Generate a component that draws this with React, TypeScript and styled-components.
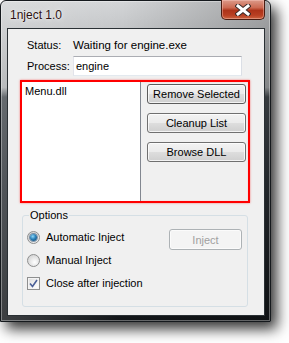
import React from "react";
import styled, { createGlobalStyle } from "styled-components";

const Global = createGlobalStyle`
  html, body { margin: 0; padding: 0; background: #ffffff; }
  body { font-family: "Liberation Sans", Arial, sans-serif; font-size: 11px; color: #000; }
  * { box-sizing: border-box; }
`;

const Page = styled.div`
  width: 289px;
  height: 343px;
  overflow: hidden;
`;

const Window = styled.div`
  position: relative;
  width: 271px;
  height: 322px;
  border: 1px solid #15191d;
  border-radius: 6px 6px 0 0;
  background:
    linear-gradient(90deg, rgba(255,255,255,0.18) 0%, rgba(255,255,255,0) 45%, rgba(0,0,0,0.22) 100%),
    linear-gradient(180deg, #d3d5d7 0%, #bfc1c3 12%, #a9acae 27%, #454b50 30%, #2a2f34 60%, #121518 100%);
  box-shadow: 6px 7px 14px rgba(0, 0, 0, 0.8), inset 0 0 0 1px rgba(255,255,255,0.35);
  display: flex;
  flex-direction: column;
  padding: 0 6px 6px 7px;
`;

const TitleBar = styled.div`
  height: 28px;
  display: flex;
  align-items: center;
  padding-left: 2px;
`;

const Title = styled.span`
  font-family: "Liberation Sans", Arial, sans-serif;
  font-size: 12px;
  color: #2e1212;
  text-shadow: 0 0 6px rgba(255, 255, 255, 0.9), 0 0 2px rgba(255,255,255,0.8);
`;

const CloseButton = styled.div`
  position: absolute;
  top: -1px;
  right: 5px;
  width: 44px;
  height: 20px;
  border: 1px solid #4a1d12;
  border-top: none;
  border-radius: 0 0 5px 5px;
  background: linear-gradient(180deg, #dc9a8a 0%, #cc6a52 40%, #ad3319 55%, #b93f22 80%, #cc6440 100%);
  box-shadow: inset 0 0 0 1px rgba(255, 210, 200, 0.4);
  display: flex;
  align-items: center;
  justify-content: center;
`;

const Client = styled.div`
  flex: 1;
  background: #f0f0f0;
  box-shadow: 0 0 0 1px #2a3034;
  display: flex;
  flex-direction: column;
  padding-top: 9px;
`;

const Row = styled.div<{ $h: number; $mt?: number }>`
  display: grid;
  grid-template-columns: 46px 1fr;
  align-items: center;
  height: ${(p) => p.$h}px;
  margin-top: ${(p) => p.$mt ?? 0}px;
  padding: 0 22px 0 19px;
  line-height: 14px;
`;

const Value = styled.span`
  font-size: 11.5px;
`;

const TextInput = styled.div`
  height: 20px;
  background: #ffffff;
  border: 1px solid #abadb3;
  border-left-color: #e2e3ea;
  border-right-color: #dbdfe6;
  border-bottom-color: #e3e9ef;
  padding: 0 2px;
  display: flex;
  align-items: center;
`;

const RedBox = styled.div`
  margin: 4px 14px 0 12px;
  height: 123px;
  border: 2px solid #ff0000;
  box-shadow: 0 0 2px rgba(255, 0, 0, 0.5), inset 0 0 1px rgba(255, 0, 0, 0.4);
  display: grid;
  grid-template-columns: 119px 1fr;
`;

const ListBox = styled.div`
  background: #ffffff;
  border-right: 1px solid #828790;
  padding: 2px 3px;
  line-height: 14px;
`;

const ButtonColumn = styled.div`
  display: flex;
  flex-direction: column;
  align-items: flex-end;
  gap: 9px;
  padding: 2px 2px 0 0;
`;

const Button = styled.div<{ $w: number; $h?: number; $disabled?: boolean; $focused?: boolean }>`
  width: ${(p) => p.$w}px;
  height: ${(p) => p.$h ?? 20}px;
  border: 1px solid ${(p) => (p.$disabled ? "#adb2b5" : p.$focused ? "#5c5c5c" : "#707070")};
  border-radius: 3px;
  background: ${(p) =>
    p.$disabled
      ? "#f4f4f4"
      : "linear-gradient(180deg, #f3f3f3 0%, #ebebeb 48%, #dddddd 52%, #cfcfcf 100%)"};
  box-shadow: inset 0 0 0 1px ${(p) => (p.$disabled ? "rgba(255,255,255,0.6)" : "rgba(255,255,255,0.75)")};
  color: ${(p) => (p.$disabled ? "#a0a0a0" : "#000")};
  display: flex;
  align-items: center;
  justify-content: center;
  font-size: 11px;
  line-height: 14px;
`;

const Group = styled.div`
  position: relative;
  margin: 12px 16px 0 14px;
  height: 92px;
  border: 1px solid #d5dfe5;
  border-radius: 3px;
  display: grid;
  grid-template-columns: 1fr auto;
  padding: 13px 5px 0 4px;
`;

const Legend = styled.span`
  position: absolute;
  top: -8px;
  left: 6px;
  padding: 0 1px;
  background: #f0f0f0;
  line-height: 14px;
`;

const OptionList = styled.div`
  display: flex;
  flex-direction: column;
  gap: 7px;
`;

const Option = styled.div`
  display: flex;
  align-items: center;
  gap: 6px;
  height: 16px;
`;

const Radio = styled.span<{ $checked?: boolean }>`
  position: relative;
  width: 13px;
  height: 13px;
  border-radius: 50%;
  border: 1px solid #8e8f8f;
  background: radial-gradient(circle at 60% 65%, #ffffff 0%, #e6e6e6 45%, #c9c9c9 100%);
  display: flex;
  align-items: center;
  justify-content: center;
  &::after {
    content: "";
    display: ${(p) => (p.$checked ? "block" : "none")};
    width: 7px;
    height: 7px;
    border-radius: 50%;
    background: radial-gradient(circle at 40% 35%, #8fd8f8 0%, #2a80b8 45%, #0d3d66 100%);
    box-shadow: 0 0 0 1px rgba(20, 60, 100, 0.5);
  }
`;

const CheckBox = styled.span`
  width: 13px;
  height: 13px;
  border: 1px solid #8e8f8f;
  background: linear-gradient(135deg, #dcdcdc 0%, #f4f4f4 60%, #ffffff 100%);
  box-shadow: inset 0 0 0 1px #f4f4f4;
  display: flex;
  align-items: center;
  justify-content: center;
`;

export default function App() {
  return (
    <Page>
      <Global />
      <Window>
        <TitleBar>
          <Title>1nject 1.0</Title>
        </TitleBar>
        <CloseButton>
          <svg width="16" height="12" viewBox="0 0 16 12">
            <path d="M3 2 L13 10 M13 2 L3 10" stroke="#3a2a28" strokeWidth="5" strokeLinecap="square" />
            <path d="M3 2 L13 10 M13 2 L3 10" stroke="#ffffff" strokeWidth="3" strokeLinecap="square" />
          </svg>
        </CloseButton>
        <Client>
          <Row $h={14}>
            <span>Status:</span>
            <Value>Waiting for engine.exe</Value>
          </Row>
          <Row $h={20} $mt={4}>
            <span>Process:</span>
            <TextInput>engine</TextInput>
          </Row>
          <RedBox>
            <ListBox>Menu.dll</ListBox>
            <ButtonColumn>
              <Button $w={99} $focused>Remove Selected</Button>
              <Button $w={99}>Cleanup List</Button>
              <Button $w={99}>Browse DLL</Button>
            </ButtonColumn>
          </RedBox>
          <Group>
            <Legend>Options</Legend>
            <OptionList>
              <Option>
                <Radio $checked />
                <span>Automatic Inject</span>
              </Option>
              <Option>
                <Radio />
                <span>Manual Inject</span>
              </Option>
              <Option>
                <CheckBox>
                  <svg width="9" height="9" viewBox="0 0 9 9">
                    <path d="M1 4.5 L3.5 7.5 L8 1" fill="none" stroke="#4a5f97" strokeWidth="1.6" />
                  </svg>
                </CheckBox>
                <span>Close after injection</span>
              </Option>
            </OptionList>
            <Button $w={73} $h={21} $disabled>Inject</Button>
          </Group>
        </Client>
      </Window>
    </Page>
  );
}
